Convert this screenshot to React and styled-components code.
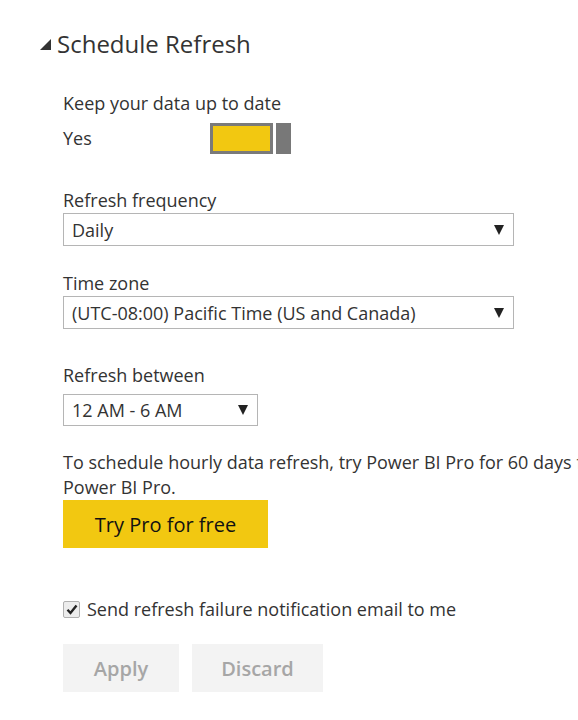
import React, { useState } from "react";
import styled, { createGlobalStyle } from "styled-components";

const GlobalStyle = createGlobalStyle`
  html, body {
    margin: 0;
    padding: 0;
    background: #ffffff;
    overflow: hidden;
  }
  body {
    font-family: "Open Sans", "Noto Sans", sans-serif;
    color: #333333;
  }
`;

const Page = styled.div`
  width: 578px;
  height: 720px;
  overflow: hidden;
  padding: 27px 0 0 40px;
  box-sizing: border-box;
`;

const Header = styled.div`
  display: flex;
  align-items: center;
  gap: 6px;
  height: 32px;
`;

const Caret = styled.span`
  width: 0;
  height: 0;
  border-style: solid;
  border-width: 0 0 11px 11px;
  border-color: transparent transparent #333333 transparent;
  margin-top: 2px;
`;

const Title = styled.h2`
  margin: 0;
  font-size: 24px;
  font-weight: 400;
  color: #333333;
  white-space: nowrap;
`;

const Body = styled.div`
  padding-left: 23px;
  display: flex;
  flex-direction: column;
`;

const Label = styled.div`
  font-size: 18px;
  line-height: 24px;
  white-space: nowrap;
`;

const ToggleRow = styled.div`
  display: flex;
  align-items: center;
  margin-top: 7px;
  height: 32px;
`;

const ToggleLabel = styled.span`
  font-size: 18px;
  width: 147px;
`;

const Toggle = styled.button`
  display: flex;
  gap: 3px;
  padding: 0;
  border: 0;
  background: none;
  cursor: pointer;
`;

const Track = styled.span`
  width: 57px;
  height: 25px;
  border: 3px solid #7a7a7a;
  background: ${(p) => (p.$on ? "#f2c811" : "#ffffff")};
`;

const Thumb = styled.span`
  width: 15px;
  height: 31px;
  background: #787878;
`;

const Field = styled.div`
  display: flex;
  flex-direction: column;
  margin-top: ${(p) => p.$top}px;
`;

const Select = styled.div`
  display: flex;
  align-items: center;
  justify-content: space-between;
  box-sizing: border-box;
  width: ${(p) => p.$width}px;
  height: ${(p) => p.$height || 33}px;
  border: 1px solid #b5b5b5;
  padding: 0 9px 0 8px;
  font-size: 18px;
  color: #333333;
  margin-top: ${(p) => p.$gap || 0}px;
  white-space: nowrap;
`;

const Arrow = styled.span`
  width: 0;
  height: 0;
  border-left: 5px solid transparent;
  border-right: 5px solid transparent;
  border-top: 10px solid #222222;
`;

const Note = styled.p`
  margin: 24px 0 0;
  font-size: 18px;
  line-height: 25px;
  white-space: nowrap;
`;

const TryButton = styled.button`
  width: 205px;
  height: 48px;
  border: 0;
  background: #f2c811;
  color: #111111;
  font-family: inherit;
  font-size: 20px;
  cursor: pointer;
`;

const CheckRow = styled.label`
  display: flex;
  align-items: center;
  gap: 7px;
  margin-top: 49px;
  font-size: 18px;
  line-height: 24px;
  white-space: nowrap;
`;

const CheckBox = styled.span`
  width: 15px;
  height: 15px;
  border: 1px solid #b0b0b0;
  border-radius: 2px;
  background: #ececec;
  display: flex;
  align-items: center;
  justify-content: center;
`;

const Actions = styled.div`
  display: flex;
  gap: 13px;
  margin-top: 23px;
`;

const GhostButton = styled.button`
  width: ${(p) => p.$width}px;
  height: 48px;
  border: 0;
  background: #f3f3f3;
  color: #a6a6a6;
  font-family: inherit;
  font-weight: 600;
  font-size: 20px;
`;

const Dropdown = ({ value, width, gap, height }) => (
  <Select $width={width} $gap={gap} $height={height}>
    <span>{value}</span>
    <Arrow />
  </Select>
);

export default function App() {
  const [on, setOn] = useState(true);
  const [notify, setNotify] = useState(true);

  return (
    <>
      <GlobalStyle />
      <Page>
        <Header>
          <Caret />
          <Title>Schedule Refresh</Title>
        </Header>
        <Body>
          <Field $top={32}>
            <Label>Keep your data up to date</Label>
            <ToggleRow>
              <ToggleLabel>Yes</ToggleLabel>
              <Toggle onClick={() => setOn(!on)}>
                <Track $on={on} />
                <Thumb />
              </Toggle>
            </ToggleRow>
          </Field>
          <Field $top={34}>
            <Label>Refresh frequency</Label>
            <Dropdown value="Daily" width={451} gap={1} />
          </Field>
          <Field $top={25}>
            <Label>Time zone</Label>
            <Dropdown
              value="(UTC-08:00) Pacific Time (US and Canada)"
              width={451}
              gap={1}
            />
          </Field>
          <Field $top={34}>
            <Label>Refresh between</Label>
            <Dropdown value="12 AM - 6 AM" width={195} gap={7} height={32} />
          </Field>
          <Note>
            To schedule hourly data refresh, try Power BI Pro for 60 days free.
            Learn more about
            <br />
            Power BI Pro.
          </Note>
          <TryButton>Try Pro for free</TryButton>
          <CheckRow onClick={() => setNotify(!notify)}>
            <CheckBox>
              {notify && (
                <svg width="12" height="11" viewBox="0 0 12 11">
                  <path
                    d="M1.5 5.8 L4.5 9 L10.5 1.5"
                    fill="none"
                    stroke="#222"
                    strokeWidth="2.4"
                  />
                </svg>
              )}
            </CheckBox>
            Send refresh failure notification email to me
          </CheckRow>
          <Actions>
            <GhostButton $width={116}>Apply</GhostButton>
            <GhostButton $width={131}>Discard</GhostButton>
          </Actions>
        </Body>
      </Page>
    </>
  );
}
